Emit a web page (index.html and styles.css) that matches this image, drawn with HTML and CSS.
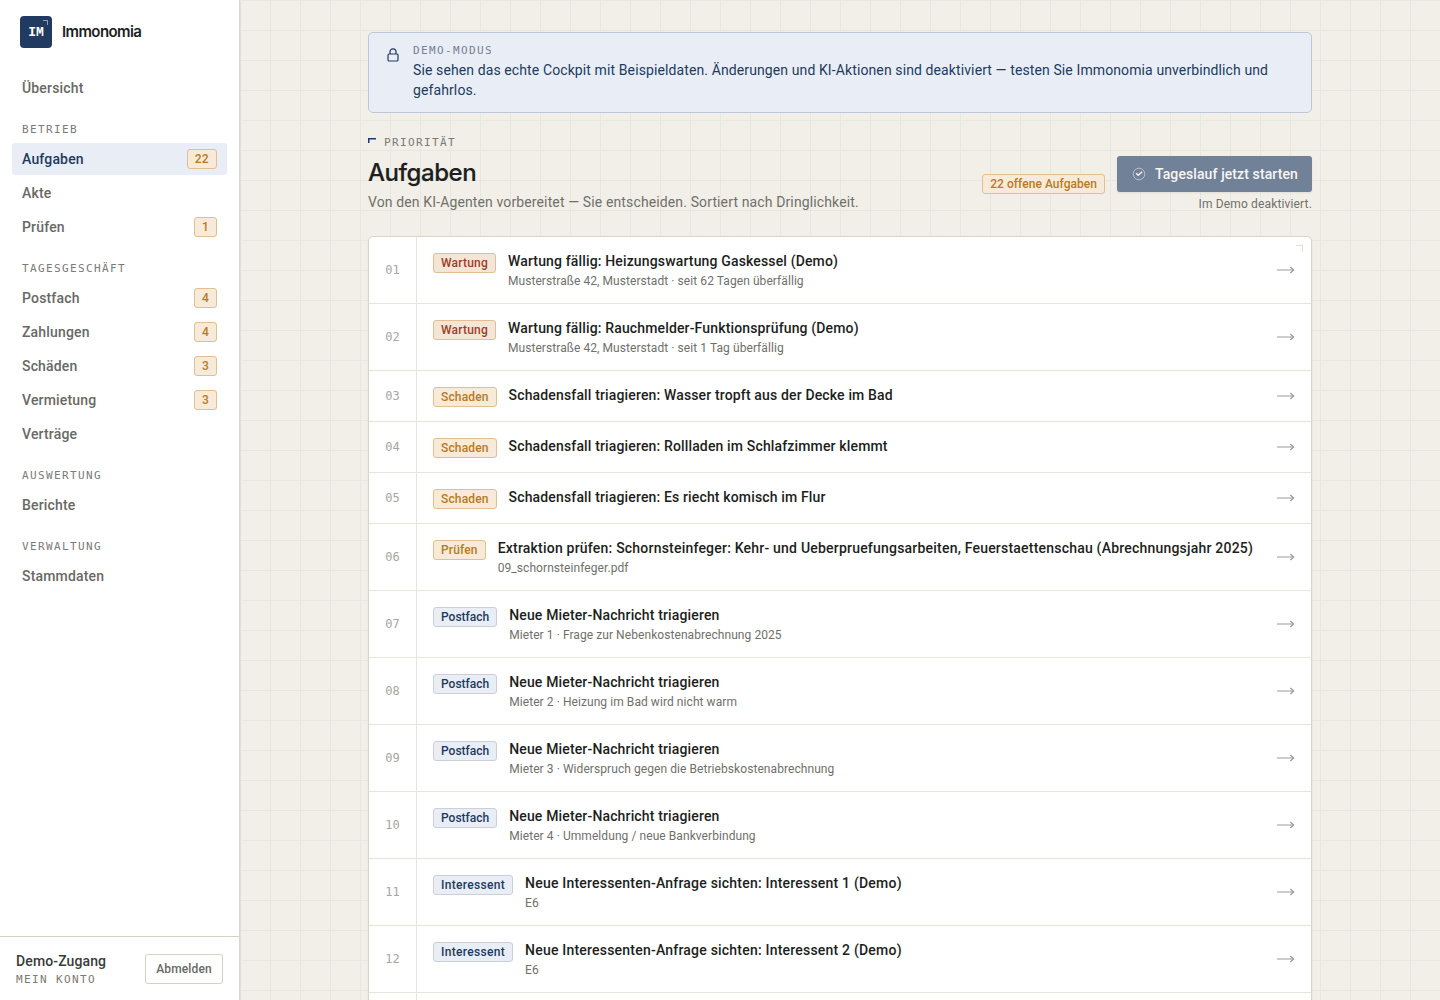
FILE: index.html
```html
<!DOCTYPE html>
<html lang="de">
<head>
    <meta charset="UTF-8">
    <title>Aufgaben – Immonomia</title>
    <link rel="stylesheet" href="styles.css">
</head>
<body>
    <svg class="sprite" width="0" height="0">
        <symbol id="arrow" viewBox="0 0 18 8">
            <path d="M0 4h16" fill="none" stroke="currentColor"/>
            <path d="M13.4 1l3.2 3-3.2 3" fill="none" stroke="currentColor" stroke-width="1.3"/>
        </symbol>
    </svg>
    <aside class="sidebar">
        <div class="brand">
            <span class="logo">IM</span>
            <span class="brand-name">Immonomia</span>
        </div>
        <nav class="nav">
            <a class="nav-item">Übersicht</a>
            <h3>Betrieb</h3>
            <a class="nav-item active">Aufgaben <span class="tag count">22</span></a>
            <a class="nav-item">Akte</a>
            <a class="nav-item">Prüfen <span class="tag count">1</span></a>
            <h3>Tagesgeschäft</h3>
            <a class="nav-item">Postfach <span class="tag count">4</span></a>
            <a class="nav-item">Zahlungen <span class="tag count">4</span></a>
            <a class="nav-item">Schäden <span class="tag count">3</span></a>
            <a class="nav-item">Vermietung <span class="tag count">3</span></a>
            <a class="nav-item">Verträge</a>
            <h3>Auswertung</h3>
            <a class="nav-item">Berichte</a>
            <h3>Verwaltung</h3>
            <a class="nav-item">Stammdaten</a>
        </nav>
        <div class="account">
            <div>
                <div class="account-name">Demo-Zugang</div>
                <div class="account-link">Mein Konto</div>
            </div>
            <button class="logout">Abmelden</button>
        </div>
    </aside>
    <main>
        <div class="content">
            <section class="banner">
                <svg class="lock" width="12" height="14" viewBox="0 0 12 14" fill="none" stroke="currentColor" stroke-width="1.2">
                    <rect x="1" y="6" width="10" height="7" rx="1"/>
                    <path d="M3 6V3.8a3 3 0 0 1 6 0V6"/>
                </svg>
                <div>
                    <div class="banner-label">Demo-Modus</div>
                    <p>Sie sehen das echte Cockpit mit Beispieldaten. Änderungen und KI-Aktionen sind deaktiviert — testen Sie Immonomia unverbindlich und gefahrlos.</p>
                </div>
            </section>
            <header class="page-head">
                <div>
                    <div class="eyebrow">Priorität</div>
                    <h1>Aufgaben</h1>
                    <p class="lead">Von den KI-Agenten vorbereitet — Sie entscheiden. Sortiert nach Dringlichkeit.</p>
                </div>
                <div class="actions">
                    <span class="tag open-count">22 offene Aufgaben</span>
                    <div class="run">
                        <button class="primary">
                            <svg width="14" height="14" viewBox="0 0 14 14" fill="none" stroke="currentColor">
                                <circle cx="7" cy="7" r="5.8" stroke-opacity=".5"/>
                                <path d="M4.2 6.3l2 2 4-3.5" stroke-width="1.4"/>
                            </svg>
                            Tageslauf jetzt starten
                        </button>
                        <div class="hint">Im Demo deaktiviert.</div>
                    </div>
                </div>
            </header>
            <div class="list">
                <div class="row">
                    <span class="num">01</span>
                    <div class="task">
                        <span class="tag danger">Wartung</span>
                        <div class="text">
                            <div class="title">Wartung fällig: Heizungswartung Gaskessel (Demo)</div>
                            <div class="sub">Musterstraße 42, Musterstadt · seit 62 Tagen überfällig</div>
                        </div>
                        <svg class="arrow"><use href="#arrow"/></svg>
                    </div>
                </div>
                <div class="row">
                    <span class="num">02</span>
                    <div class="task">
                        <span class="tag danger">Wartung</span>
                        <div class="text">
                            <div class="title">Wartung fällig: Rauchmelder-Funktionsprüfung (Demo)</div>
                            <div class="sub">Musterstraße 42, Musterstadt · seit 1 Tag überfällig</div>
                        </div>
                        <svg class="arrow"><use href="#arrow"/></svg>
                    </div>
                </div>
                <div class="row">
                    <span class="num">03</span>
                    <div class="task">
                        <span class="tag">Schaden</span>
                        <div class="text">
                            <div class="title">Schadensfall triagieren: Wasser tropft aus der Decke im Bad</div>
                        </div>
                        <svg class="arrow"><use href="#arrow"/></svg>
                    </div>
                </div>
                <div class="row">
                    <span class="num">04</span>
                    <div class="task">
                        <span class="tag">Schaden</span>
                        <div class="text">
                            <div class="title">Schadensfall triagieren: Rollladen im Schlafzimmer klemmt</div>
                        </div>
                        <svg class="arrow"><use href="#arrow"/></svg>
                    </div>
                </div>
                <div class="row">
                    <span class="num">05</span>
                    <div class="task">
                        <span class="tag">Schaden</span>
                        <div class="text">
                            <div class="title">Schadensfall triagieren: Es riecht komisch im Flur</div>
                        </div>
                        <svg class="arrow"><use href="#arrow"/></svg>
                    </div>
                </div>
                <div class="row">
                    <span class="num">06</span>
                    <div class="task">
                        <span class="tag">Prüfen</span>
                        <div class="text">
                            <div class="title title-long">Extraktion prüfen: Schornsteinfeger: Kehr- und Ueberpruefungsarbeiten, Feuerstaettenschau (Abrechnungsjahr 2025)</div>
                            <div class="sub">09_schornsteinfeger.pdf</div>
                        </div>
                        <svg class="arrow"><use href="#arrow"/></svg>
                    </div>
                </div>
                <div class="row">
                    <span class="num">07</span>
                    <div class="task">
                        <span class="tag info">Postfach</span>
                        <div class="text">
                            <div class="title">Neue Mieter-Nachricht triagieren</div>
                            <div class="sub">Mieter 1 · Frage zur Nebenkostenabrechnung 2025</div>
                        </div>
                        <svg class="arrow"><use href="#arrow"/></svg>
                    </div>
                </div>
                <div class="row">
                    <span class="num">08</span>
                    <div class="task">
                        <span class="tag info">Postfach</span>
                        <div class="text">
                            <div class="title">Neue Mieter-Nachricht triagieren</div>
                            <div class="sub">Mieter 2 · Heizung im Bad wird nicht warm</div>
                        </div>
                        <svg class="arrow"><use href="#arrow"/></svg>
                    </div>
                </div>
                <div class="row">
                    <span class="num">09</span>
                    <div class="task">
                        <span class="tag info">Postfach</span>
                        <div class="text">
                            <div class="title">Neue Mieter-Nachricht triagieren</div>
                            <div class="sub">Mieter 3 · Widerspruch gegen die Betriebskostenabrechnung</div>
                        </div>
                        <svg class="arrow"><use href="#arrow"/></svg>
                    </div>
                </div>
                <div class="row">
                    <span class="num">10</span>
                    <div class="task">
                        <span class="tag info">Postfach</span>
                        <div class="text">
                            <div class="title">Neue Mieter-Nachricht triagieren</div>
                            <div class="sub">Mieter 4 · Ummeldung / neue Bankverbindung</div>
                        </div>
                        <svg class="arrow"><use href="#arrow"/></svg>
                    </div>
                </div>
                <div class="row">
                    <span class="num">11</span>
                    <div class="task">
                        <span class="tag info prospect">Interessent</span>
                        <div class="text">
                            <div class="title title-long">Neue Interessenten-Anfrage sichten: Interessent 1 (Demo)</div>
                            <div class="sub">E6</div>
                        </div>
                        <svg class="arrow"><use href="#arrow"/></svg>
                    </div>
                </div>
                <div class="row">
                    <span class="num">12</span>
                    <div class="task">
                        <span class="tag info prospect">Interessent</span>
                        <div class="text">
                            <div class="title title-long">Neue Interessenten-Anfrage sichten: Interessent 2 (Demo)</div>
                            <div class="sub">E6</div>
                        </div>
                        <svg class="arrow"><use href="#arrow"/></svg>
                    </div>
                </div>
                <div class="row"><span class="num"></span></div>
            </div>
        </div>
    </main>
</body>
</html>
```

FILE: styles.css
```css
* {
    box-sizing: border-box;
}

body {
    margin: 0;
    display: flex;
    height: 1000px;
    overflow: hidden;
    font-family: Roboto, "Noto Sans", sans-serif;
    font-size: 14px;
    line-height: 20px;
    color: #1c1e20;
    background-color: #f2efe8;
}

h1, h3, p {
    margin: 0;
}

button {
    font-family: inherit;
}

.sprite {
    position: absolute;
}

/* sidebar */
.sidebar {
    display: flex;
    flex-direction: column;
    flex: none;
    width: 240px;
    background: #fff;
    border-right: 1px solid #d9d9cf;
    z-index: 1;
    box-shadow: 0 1px 2px rgba(30, 40, 50, 0.1);
}

.brand {
    display: flex;
    align-items: center;
    gap: 10px;
    padding: 16px 20px 24px;
}

.logo {
    position: relative;
    width: 32px;
    height: 32px;
    border-radius: 4px;
    background: #213a61;
    color: #fff;
    font: bold 13px/33px "Liberation Mono", monospace;
    text-align: center;
}

.logo::after, .list::after {
    content: "";
    position: absolute;
    top: 4px;
    right: 4px;
    width: 4px;
    height: 4px;
    border: solid #8f9db2;
    border-width: 1px 1px 0 0;
}

.brand-name {
    font: 600 15px/20px Inter, sans-serif;
    letter-spacing: -0.6px;
}

.nav {
    display: flex;
    flex-direction: column;
    gap: 2px;
    padding: 0 12px;
    flex: 1;
}

.nav h3 {
    margin: 15px 10px 3px;
    font: 11px/17px "DejaVu Sans Mono", monospace;
    letter-spacing: 1.38px;
    text-transform: uppercase;
    color: #7a7a76;
}

.nav-item {
    display: flex;
    align-items: center;
    justify-content: space-between;
    height: 32px;
    padding: 0 10px;
    border-radius: 3px;
    font-weight: 500;
    letter-spacing: 0.17px;
    color: #686965;
}

.nav-item.active {
    background: #e9eef6;
    color: #213a61;
}

.tag {
    flex: none;
    height: 20px;
    padding: 0 7px;
    border: 1px solid #e2bf91;
    border-radius: 3px;
    background: #f7ead8;
    color: #b97a21;
    font-size: 12px;
    font-weight: 500;
    line-height: 18px;
    letter-spacing: 0.15px;
}

.count {
    letter-spacing: 0.3px;
}

.account {
    display: flex;
    align-items: center;
    justify-content: space-between;
    height: 64px;
    padding: 1px 16px 0;
    border-top: 1px solid #d8d1c3;
}

.account-name {
    margin-top: 2px;
    font-weight: 500;
    letter-spacing: 0.12px;
    color: #3a3b3b;
}

.account-link {
    font: 11px/18px "DejaVu Sans Mono", monospace;
    letter-spacing: 1.38px;
    text-transform: uppercase;
    color: #7a7a76;
}

.logout {
    width: 78px;
    height: 30px;
    padding: 0;
    border: 1px solid #d8d1c3;
    border-radius: 3px;
    background: #fff;
    color: #686965;
    font-size: 12px;
    font-weight: 500;
    letter-spacing: 0.15px;
}

/* page */
main {
    flex: 1;
    padding: 32px;
    background-image:
        linear-gradient(#e7e7e2 1px, transparent 1px),
        linear-gradient(90deg, #e7e7e2 1px, transparent 1px);
    background-size: 30px 30px;
}

.content {
    width: 944px;
    margin: 0 auto;
}

.banner {
    display: flex;
    gap: 14px;
    height: 81px;
    padding: 11px 18px;
    border: 1px solid #bcc8da;
    border-radius: 5px;
    background: #e9eef6;
    color: #213a61;
}

.lock {
    flex: none;
    margin-top: 4px;
}

.banner-label {
    margin-bottom: 2px;
    font: 11px/14px "DejaVu Sans Mono", monospace;
    letter-spacing: 1.38px;
    text-transform: uppercase;
    color: #738097;
}

.banner p {
    letter-spacing: 0.108px;
}

.page-head {
    display: flex;
    justify-content: space-between;
    height: 123px;
    padding-top: 20px;
}

.eyebrow {
    display: flex;
    gap: 8px;
    padding-top: 1px;
    font: 11px/18px "DejaVu Sans Mono", monospace;
    letter-spacing: 1.38px;
    text-transform: uppercase;
    color: #7a7a76;
}

.eyebrow::before {
    content: "";
    width: 8px;
    height: 5px;
    margin-top: 4px;
    background:
        linear-gradient(#213a61, #213a61) 0 0 / 8px 1.5px no-repeat,
        linear-gradient(#213a61, #213a61) 0 0 / 1.5px 5px no-repeat;
}

h1 {
    margin: 5px 0 3px;
    font: 500 24px/32px Inter, sans-serif;
    letter-spacing: -0.45px;
    -webkit-text-stroke: 0.2px;
}

.lead {
    color: #70706b;
    letter-spacing: 0.125px;
}

.actions {
    display: flex;
    gap: 12px;
    padding-top: 23px;
}

.open-count {
    margin-top: 18px;
    letter-spacing: 0.04px;
}

.run {
    text-align: right;
}

.primary {
    display: flex;
    align-items: center;
    gap: 9px;
    width: 195px;
    height: 36px;
    padding: 0 0 0 15px;
    border: 0;
    border-radius: 3px;
    background: #718197;
    color: #f7f6f4;
    font-size: 14px;
    font-weight: 500;
    letter-spacing: 0.1px;
    white-space: nowrap;
    box-shadow: 0 1px 2px rgba(30, 40, 50, 0.08);
}

.hint {
    margin-top: 2px;
    font-size: 12px;
    letter-spacing: 0.15px;
    color: #70706b;
}

/* task list */
.list {
    position: relative;
    border: 1px solid #d9d6c9;
    border-radius: 5px;
    background: #fff;
    box-shadow: 0 1px 2px rgba(30, 40, 50, 0.08);
}

.list::after {
    top: 8px;
    right: 8px;
    width: 6px;
    height: 6px;
    border-color: #dededa;
}

.row {
    display: flex;
    border-bottom: 1px solid #e7e4d9;
}

.num {
    display: flex;
    align-items: center;
    justify-content: center;
    width: 48px;
    min-height: 30px;
    border-right: 1px solid #e7e4d9;
    font: 12px "DejaVu Sans Mono", monospace;
    color: #a6a6a3;
}

.task {
    display: flex;
    align-items: flex-start;
    flex: 1;
    gap: 12px;
    padding: 14px 16px;
}

.task .tag {
    margin-top: 2px;
}

.text {
    flex: 1;
    white-space: nowrap;
}

.title {
    font-weight: 500;
    letter-spacing: 0.15px;
}

.title-long {
    letter-spacing: 0.21px;
}

.sub {
    margin-top: 2px;
    font-size: 12px;
    line-height: 16px;
    letter-spacing: 0.07px;
    color: #70706b;
}

.tag.danger {
    background: #f3e6d7;
    color: #a03d27;
    letter-spacing: 0.2px;
}

.tag.info {
    border-color: #ccd0d6;
    background: #e9eef6;
    color: #213a61;
    letter-spacing: 0;
}

.tag.prospect {
    letter-spacing: 0.32px;
}

.arrow {
    align-self: center;
    width: 18px;
    height: 8px;
    color: #9a9a97;
}
```
